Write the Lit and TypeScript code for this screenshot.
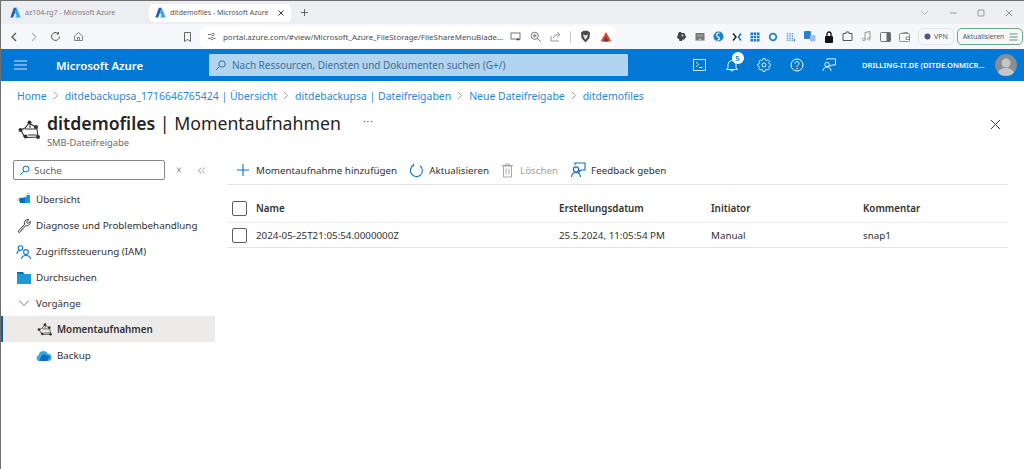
import { LitElement, html, css, svg } from "lit";
import { customElement } from "lit/decorators.js";

const i = (w: number, h: number, body: unknown, cls = "") =>
  html`<svg class="ic ${cls}" width=${w} height=${h} viewBox="0 0 ${w} ${h}" fill="none">${body}</svg>`;

const azureLogo = i(11, 11, svg`<path d="M3.800 .8h2.900L3.200 10.400H.3z" fill="#1f5fb8"/><path d="M6.700 .8l4 9.600H4.800l1.800-1.500L5 5.600z" fill="#3ba6ea"/>`);
const feedback = (c: string) => i(16, 16, svg`
  <circle cx="6" cy="7.500" r="2.600" stroke=${c} stroke-width="1.100"/>
  <path d="M1.500 15c.3-3 2-4.500 4.500-4.500s4.200 1.500 4.500 4.500" stroke=${c} stroke-width="1.100"/>
  <path d="M5 3V1h10v7h-4l-2 2V8" stroke=${c} stroke-width="1.100"/>`);
const snapshot = (s: number) => i(Math.round(24 * s), Math.round(24 * s), svg`<g transform="scale(${s})">
  <path d="M5 13l4-2 4-5 5 3 3 3 1 8-11 .5-3-1.500z" stroke="#333" stroke-width="1.100"/>
  <path d="M9 12h11M12 18h9M14 6v5" stroke="#333" stroke-width="1"/>
  <circle cx="13.500" cy="5.500" r="2" fill="#333"/><circle cx="20" cy="10" r="2" fill="#333"/><circle cx="4.500" cy="13" r="2" fill="#333"/><circle cx="22" cy="20" r="2" fill="#333"/><circle cx="9.500" cy="19.500" r="2" fill="#333"/></g>`);

@customElement("app-root")
export class AppRoot extends LitElement {
  static styles = css`
    :host { display: block; width: 1024px; height: 469px; overflow: hidden; }
    * { box-sizing: border-box; }
    .ic { display: block; flex: none; }
    .win { width: 1024px; height: 469px; background: #fff; display: flex; flex-direction: column; border-left: 1px solid #6e6e6e; border-top: 1px solid #6e6e6e; font-family: "Noto Sans", sans-serif; color: #323130; }

    .tabs { height: 23px; background: #eceef2; display: flex; align-items: center; padding-left: 2px; font-size: 7px; color: #7a7d82; white-space: nowrap; }
    .tab { display: flex; align-items: center; gap: 4px; height: 18px; padding: 0 7px; width: 146px; }
    .tab.on { background: #fff; width: 142px; border-radius: 5px; color: #50545a; padding-left: 6px; padding-right: 6px; }
    .tab .x { margin-left: auto; }
    .plus { margin-left: 9px; }
    .winctl { margin-left: auto; display: flex; align-items: center; gap: 20px; padding-right: 11px; }

    .bar { height: 25px; background: #f6f7fa; display: flex; align-items: center; }
    .nav { display: flex; align-items: center; gap: 12px; padding-left: 9px; width: 199px; flex: none; }
    .nav .bm { margin-left: 87px; }
    .url { width: 415px; height: 22px; background: #fff; border-radius: 6px; display: flex; align-items: center; padding: 0 5px 0 7px; font-size: 7.900px; color: #4a4d52; gap: 7px; white-space: nowrap; flex: none; }
    .url .end { margin-left: auto; display: flex; align-items: center; gap: 9px; }
    .sep { width: 1px; height: 12px; background: #c8c8c8; }
    .ext { display: flex; align-items: center; gap: 8px; margin-left: 61px; flex: none; }
    .vpn { margin-left: 8px; display: flex; align-items: center; gap: 3px; height: 17px; padding: 0 5px; border: 1px solid #e3e5e8; border-radius: 5px; font-size: 7px; color: #55585c; flex: none; }
    .upd { margin-left: 3px; width: 66px; height: 17px; display: flex; align-items: center; justify-content: space-between; padding: 0 4px 0 5px; border: 1px solid #6ea77f; border-radius: 5px; font-size: 6.800px; color: #55585c; flex: none; }

    .azure { height: 32px; background: #0078d4; display: flex; align-items: center; color: #fff; }
    .ham { margin-left: 13px; }
    .brand { margin-left: 29px; font-size: 11.350px; font-weight: 600; width: 153px; white-space: nowrap; }
    .search { width: 419px; height: 22px; background: #b1d4f0; border-radius: 1px; display: flex; align-items: center; padding-left: 6px; gap: 6px; font-size: 9.950px; color: #3f6e94; white-space: nowrap; }
    .top { margin-left: 65px; display: flex; align-items: center; gap: 18.500px; }
    .bell { position: relative; }
    .badge { position: absolute; left: 7px; top: -6px; width: 12px; height: 12px; border-radius: 50%; background: #fff; color: #0078d4; font-size: 7.500px; font-weight: 600; display: flex; align-items: center; justify-content: center; }
    .tenant { margin-left: 26px; font-size: 7.550px; font-weight: 600; width: 133px; white-space: nowrap; }
    .ava { width: 22px; height: 22px; border-radius: 50%; background: #8a8d92; overflow: hidden; }

    .crumb { height: 29px; display: flex; align-items: center; gap: 6px; padding-left: 16px; font-size: 10.450px; color: #2b88d8; white-space: nowrap; }
    .title { height: 43px; display: flex; align-items: flex-start; padding-left: 15px; padding-top: 1px; }
    .title .logo { margin-top: 6px; margin-right: 7px; }
    h1 { margin: 0; font-size: 17.700px; font-weight: 400; line-height: 24px; color: #252423; white-space: nowrap; }
    h1 b { font-weight: 600; }
    .sub { font-size: 9.300px; color: #6b6a69; line-height: 13px; margin-top: 1px; }
    .more { margin-left: 22px; margin-top: 3px; font-size: 10px; color: #555; letter-spacing: 1px; line-height: 14px; }
    .close { margin-left: auto; margin-right: 23px; margin-top: 8px; }

    .body { flex: 1; display: flex; padding-top: 7px; }
    .side { width: 214px; display: flex; flex-direction: column; }
    .find { display: flex; align-items: center; padding-left: 12px; height: 20px; margin-bottom: 6px; }
    .box { width: 152px; height: 20px; border: 1px solid #8a8886; border-radius: 2px; display: flex; align-items: center; gap: 4px; padding-left: 5px; font-size: 9.800px; color: #605e5c; }
    .fx { margin-left: 10px; } .cc { margin-left: 14px; }
    .it { height: 26px; display: flex; align-items: center; gap: 4px; padding-left: 15px; font-size: 9.800px; color: #323130; white-space: nowrap; }
    .it.sub2 { padding-left: 35px; gap: 5px; }
    .it.on { background: #edebe9; font-weight: 600; border-left: 2px solid #0f5fa8; padding-left: 33px; }
    .it .ic { width: 16px; }

    .main { flex: 1; padding: 0 16px 0 12px; font-size: 9.800px; white-space: nowrap; }
    .cmds { margin-top: -4px; display: flex; align-items: center; border-bottom: 1px solid #e3e3e3; padding-left: 9px; height: 29px; }
    .cmd { display: flex; align-items: center; gap: 5px; margin-right: 12px; color: #323130; }
    .cmd:first-child { gap: 6px; }
    .cmd.off { color: #a19f9d; gap: 6px; }
    .row { display: grid; grid-template-columns: 24px 303px 152px 152px 1fr; align-items: center; padding-left: 5px; height: 25px; border-bottom: 1px solid #eeedec; }
    .row.head { font-weight: 600; height: 38px; padding-top: 9px; }
    .row.data { border-bottom: 1px solid #e3e3e3; }
    .chk { width: 15px; height: 15px; border: 1px solid #605e5c; border-radius: 2px; }
  `;

  render() {
    return html`<div class="win">
      <div class="tabs">
        <div class="tab">${azureLogo}<span>az104-rg7 - Microsoft Azure</span></div>
        <div class="tab on">${azureLogo}<span>ditdemofiles - Microsoft Azure</span>
          ${i(8, 8, svg`<path d="M1.500 1.500l5 5m0-5l-5 5" stroke="#444" stroke-width="1"/>`, "x")}</div>
        ${i(9, 9, svg`<path d="M4.500 1v7M1 4.500h7" stroke="#666" stroke-width="1"/>`, "plus")}
        <div class="winctl">
          ${i(9, 6, svg`<path d="M1 1l3.500 3.500L8 1" stroke="#a8aaae" stroke-width=".8"/>`)}
          ${i(8, 8, svg`<path d="M1 4h6.500" stroke="#8a8d91" stroke-width=".9"/>`)}
          ${i(8, 8, svg`<rect x="1" y="1" width="6" height="6" rx="1" stroke="#8a8d91" stroke-width=".9"/>`)}
          ${i(8, 8, svg`<path d="M1 1l6 6M7 1L1 7" stroke="#8a8d91" stroke-width=".9"/>`)}
        </div>
      </div>
      <div class="bar">
        <div class="nav">
          ${i(8, 12, svg`<path d="M6 2L2 6l4 4" stroke="#555" stroke-width="1.200"/>`)}
          ${i(8, 12, svg`<path d="M2 2l4 4-4 4" stroke="#bbb" stroke-width="1.200"/>`)}
          ${i(11, 11, svg`<path d="M9.500 5.500a4 4 0 1 1-1.200-2.900M8.500 1v2H6.500" stroke="#555" stroke-width="1"/>`)}
          ${i(11, 11, svg`<path d="M1.500 5.200L5.500 1.500l4 3.700v4.300h-8zM4.500 9.500V6.500h2v3" stroke="#777" stroke-width=".9"/>`)}
          ${i(9, 12, svg`<path d="M1.500 1.500h6v9L4.500 8.500l-3 2z" stroke="#666" stroke-width="1"/>`, "bm")}
        </div>
        <div class="url">
          ${i(9, 9, svg`<path d="M1 2.500h3M6.500 6.500H8.500M3 6.500H1" stroke="#666" stroke-width=".9"/><circle cx="6" cy="2.500" r="1.300" stroke="#666" stroke-width=".8"/><circle cx="5" cy="6.500" r="1.300" stroke="#666" stroke-width=".8"/>`)}
          <span>portal.azure.com/#view/Microsoft_Azure_FileStorage/FileShareMenuBlade...</span>
          <div class="end">
            ${i(11, 9, svg`<rect x="1" y="1" width="9" height="6" stroke="#666" stroke-width=".9"/><path d="M6.500 7.500h3" stroke="#444" stroke-width="1.500"/>`)}
            ${i(11, 11, svg`<circle cx="4.800" cy="4.800" r="3.600" stroke="#666" stroke-width=".9"/><path d="M7.500 7.500l3 3M3 4.800h3.600M4.800 3v3.600" stroke="#666" stroke-width=".9"/>`)}
            ${i(11, 11, svg`<path d="M1 5v5h8M3.500 7c.5-2.500 2-3.500 5-3.500M7 1l3 2.500L7 6" stroke="#888" stroke-width=".9"/>`)}
            <span class="sep"></span>
            ${i(11, 13, svg`<path d="M1 2.500L3.500.8h4L10 2.500 9.500 8 5.500 12.500 1.500 8z" fill="#4a4a4a"/><path d="M3 4.500l2.500.8 2.500-.8-1 3.500-1.500 1.500L4 8z" fill="#dcdcdc"/>`)}
            ${i(12, 11, svg`<path d="M6 1l5.500 9.500H.5z" fill="#e2492f"/><path d="M6 5l2.500 5.500h-5z" fill="#3a4a5a"/>`)}
          </div>
        </div>
        <div class="ext">
          ${i(11, 11, svg`<path d="M2 3l1-2h2l.5 1H8l1 1 .5 2 1 1-1.500 1-.5 1.500-2 0-.5 1.500H3.500L3 8 1 7z" fill="#444"/><circle cx="6.500" cy="4.500" r="1" fill="#ddd"/>`)}
          ${i(10, 10, svg`<rect x=".5" y="1" width="9" height="7.500" fill="#777"/><path d="M2.500 8.500l2.500-2.500 2.500 2.500" fill="#bbb"/><rect x="2" y="2.500" width="6" height="2" fill="#999"/>`)}
          ${i(11, 11, svg`<circle cx="5.500" cy="5.500" r="5" fill="#1a80d0"/><path d="M6.500 2C4 2 3 3.500 4 5c1 1.500 2.500 1 2.500 3L4.500 9.500" stroke="#fff" stroke-width="1.200"/>`)}
          ${i(10, 10, svg`<path d="M1 1.500L4 5 1 8.500" stroke="#222" stroke-width="1.500"/><path d="M9 1.500L6.500 5 9 8.500" stroke="#1a70c0" stroke-width="1.500"/>`)}
          ${i(10, 10, svg`<rect x=".5" y=".5" width="9" height="9" fill="#1f78d1"/><path d="M3.500 .5v9M6.500 .5v9M.5 3.500h9M.5 6.500h9" stroke="#fff" stroke-width=".7"/>`)}
          ${i(10, 10, svg`<circle cx="5" cy="5" r="3.300" stroke="#2a80c8" stroke-width="1.800"/>`)}
          ${i(10, 10, svg`<path d="M1.500 1v8M4 1v8M6.500 1v8" stroke="#6aa4e0" stroke-width="1.500" stroke-dasharray="1.500 .7"/><path d="M8.500 7v2.500" stroke="#2a70c0"/>`)}
          ${i(12, 11, svg`<rect x="0" y="0" width="7" height="8" rx="1" fill="#2a80d0"/><rect x="6" y="4" width="5.500" height="6.500" rx="1" fill="#9cc0e8"/>`)}
          ${i(10, 12, svg`<rect x="1" y="5" width="8" height="7" rx="1" fill="#111"/><path d="M3 5.500V3a2 2 0 0 1 4 0v2.500" stroke="#111" stroke-width="1.300"/>`)}
          ${i(11, 11, svg`<path d="M1 2.500h3V1h3v1.500h3v7H1z" stroke="#555" stroke-width="1"/>`)}
          ${i(11, 11, svg`<path d="M4 8.500V1.500l5-1v7" stroke="#888" stroke-width=".9"/><circle cx="2.800" cy="8.500" r="1.300" stroke="#888" stroke-width=".8"/><circle cx="7.800" cy="7.800" r="1.300" stroke="#888" stroke-width=".8"/>`)}
          ${i(11, 10, svg`<rect x=".5" y=".5" width="10" height="9" rx="1" stroke="#666" stroke-width=".9"/><rect x="6.500" y=".5" width="4" height="9" fill="#666"/>`)}
          ${i(11, 10, svg`<rect x=".5" y="1.500" width="10" height="8" rx="1" stroke="#777" stroke-width=".8"/><path d="M7 5h3.500v2.500H7zM2 1.500L6 .5h3" stroke="#777" stroke-width=".8"/>`)}
        </div>
        <div class="vpn">${i(7, 7, svg`<circle cx="3.500" cy="3.500" r="3" fill="#4a5a70"/>`)}VPN</div>
        <div class="upd">Aktualisieren ${i(9, 8, svg`<path d="M.5 1h8M.5 4h8M.5 7h8" stroke="#6b9077" stroke-width="1"/>`)}</div>
      </div>
      <div class="azure">
        ${i(13, 10, svg`<path d="M0 1h13M0 5h13M0 9h13" stroke="#d4e8f8" stroke-width="1"/>`, "ham")}
        <div class="brand">Microsoft Azure</div>
        <div class="search">
          ${i(11, 11, svg`<circle cx="7" cy="4" r="3.200" stroke="#3f6e94" stroke-width="1"/><path d="M4.500 6.500L1 10" stroke="#3f6e94" stroke-width="1"/>`)}
          <span>Nach Ressourcen, Diensten und Dokumenten suchen (G+/)</span>
        </div>
        <div class="top">
          ${i(13, 12, svg`<rect x=".5" y=".5" width="12" height="11" stroke="#fff" stroke-width=".8"/><path d="M3 3l2.500 2.500L3 8M6 8.500h3.500" stroke="#fff" stroke-width=".9"/>`)}
          <div class="bell">${i(14, 14, svg`<path d="M3 10V6.500a4 4 0 0 1 8 0V10l1.500 1.500h-11zM5.500 11.500a1.500 1.500 0 0 0 3 0" stroke="#fff" stroke-width=".9"/>`)}<span class="badge">5</span></div>
          ${i(14, 14, svg`<circle cx="7" cy="7" r="2" stroke="#fff" stroke-width=".9"/><path d="M5.800 1h2.400l.4 1.700 1.300.6 1.500-.9 1.600 1.600-.9 1.500.6 1.300 1.700.4v1.600l-1.700.4-.6 1.300.9 1.500-1.600 1.600-1.500-.9-1.300.6-.4 1.700H5.800l-.4-1.700-1.300-.6-1.500.9-1.600-1.600.9-1.500-.6-1.300L0 8.800V7.200l1.700-.4.600-1.300-.9-1.500L3 2.400l1.500.9 1.300-.6z" transform="translate(.6 -.4) scale(.92)" stroke="#fff" stroke-width=".9"/>`)}
          ${i(14, 14, svg`<circle cx="7" cy="7" r="6" stroke="#fff" stroke-width="1"/><path d="M5 5.500a2 2 0 1 1 3 1.700c-.7.400-1 .8-1 1.500" stroke="#fff" stroke-width="1"/><circle cx="7" cy="10.500" r=".7" fill="#fff"/>`)}
          ${i(14, 14, svg`<circle cx="5" cy="6.500" r="2.200" stroke="#fff" stroke-width=".9"/><path d="M1 13c.2-2.700 1.800-4 4-4s3.800 1.300 4 4M5 2V.8h8.500V7H9.500L8 8.500V7" stroke="#fff" stroke-width=".9"/>`)}
        </div>
        <div class="tenant">DRILLING-IT.DE (DITDE.ONMICR...</div>
        <div class="ava">${i(22, 22, svg`<circle cx="11" cy="9" r="4.500" fill="#c4c6c9"/><path d="M2 23c0-6 4-9 9-9s9 3 9 9z" fill="#c4c6c9"/>`)}</div>
      </div>
      <div class="crumb">
        <span>Home</span>${this.chev()}<span>ditdebackupsa_1716646765424 | Übersicht</span>${this.chev()}<span>ditdebackupsa | Dateifreigaben</span>${this.chev()}<span>Neue Dateifreigabe</span>${this.chev()}<span>ditdemofiles</span>
      </div>
      <div class="title">
        <div class="logo">${snapshot(1)}</div>
        <div>
          <h1><b>ditdemofiles</b> | Momentaufnahmen</h1>
          <div class="sub">SMB-Dateifreigabe</div>
        </div>
        <div class="more">···</div>
        ${i(11, 11, svg`<path d="M1 1l9 9M10 1l-9 9" stroke="#444" stroke-width="1"/>`, "close")}
      </div>
      <div class="body">
        <div class="side">
          <div class="find">
            <div class="box">${i(11, 11, svg`<circle cx="7" cy="4" r="3" stroke="#0078d4" stroke-width="1"/><path d="M4.700 6.300L1 10" stroke="#0078d4" stroke-width="1"/>`)}Suche</div>
            ${i(8, 8, svg`<path d="M2 1.500l4 5M6 1.500l-4 5" stroke="#777" stroke-width=".8"/>`, "fx")}
            ${i(9, 9, svg`<path d="M4.500 1.500L1.500 4.500l3 3M8 1.500L5 4.500l3 3" stroke="#8a8a8a" stroke-width=".8"/>`, "cc")}
          </div>
          <div class="it">${i(16, 14, svg`<path d="M4 6l6-1 1-2h3v8H5L3 9z" fill="#1a9ad6"/><path d="M3 6h6v5H4z" fill="#0f6cbd"/><circle cx="12" cy="1.500" r=".8" fill="#59b4e8"/><circle cx="1.500" cy="8" r=".8" fill="#59b4e8"/>`)}Übersicht</div>
          <div class="it">${i(16, 15, svg`<path d="M2 13.500L8.500 6.500c-.8-2.500.8-5 3.500-5l.8.300L10.500 4l1.500 1.500 2.200-2.200c.5 3-2 5.200-4.600 4.300L3.500 14.500z" stroke="#333" stroke-width="1"/>`)}Diagnose und Problembehandlung</div>
          <div class="it">${i(16, 15, svg`<circle cx="4.500" cy="4" r="2.300" stroke="#0f78d0" stroke-width="1.100"/><path d="M1 10c0-2 1.500-3.500 3.500-3.500" stroke="#0f78d0" stroke-width="1.100"/><circle cx="10" cy="8" r="2.400" stroke="#0f78d0" stroke-width="1.100"/><path d="M5.500 15c.2-2.300 2-3.500 4.500-3.500s4.300 1.200 4.500 3.500" stroke="#0f78d0" stroke-width="1.100"/>`)}Zugriffssteuerung (IAM)</div>
          <div class="it">${i(16, 13, svg`<path d="M1 1h6l1 2H15v10H1z" fill="#1a9ad6"/><path d="M1 1h6l1 2H1z" fill="#0f6cbd"/>`)}Durchsuchen</div>
          <div class="it">${i(16, 9, svg`<path d="M3 1.500l5 5 5-5" stroke="#666" stroke-width=".9"/>`)}Vorgänge</div>
          <div class="it sub2 on">${snapshot(0.66)}Momentaufnahmen</div>
          <div class="it sub2">${i(16, 13, svg`<path d="M3 12a3 3 0 0 1-.5-5.800C3 3.500 5 2 7.500 2c2 0 3.500 1 4.300 2.700A3.500 3.500 0 0 1 12 12z" fill="#3aa8e0"/><path d="M5 8a3 3 0 0 1 5-2l4 1.500L11 12H3z" fill="#0f6cc0"/>`)}Backup</div>
        </div>
        <div class="main">
          <div class="cmds">
            <div class="cmd">${i(14, 14, svg`<path d="M7 1v12M1 7h12" stroke="#0078d4" stroke-width="1.100"/>`)}Momentaufnahme hinzufügen</div>
            <div class="cmd">${i(15, 15, svg`<path d="M11 2.800a6 6 0 1 1-6.500-.5M4.500 .8V3H2.300" stroke="#0078d4" stroke-width="1.100"/>`)}Aktualisieren</div>
            <div class="cmd off">${i(13, 15, svg`<path d="M2.500 3h8v11h-8zM1 2.500h11M4.500 2.500V1h4v1.500M5 5.500v6M8 5.500v6" stroke="#a19f9d" stroke-width=".9"/>`)}Löschen</div>
            <div class="cmd">${feedback("#0f6cbd")}Feedback geben</div>
          </div>
          <div class="row head"><span class="chk"></span><span>Name</span><span>Erstellungsdatum</span><span>Initiator</span><span>Kommentar</span></div>
          <div class="row data"><span class="chk"></span><span>2024-05-25T21:05:54.0000000Z</span><span>25.5.2024, 11:05:54 PM</span><span>Manual</span><span>snap1</span></div>
        </div>
      </div>
    </div>`;
  }

  chev() {
    return i(6, 9, svg`<path d="M1 1l3.500 3.500L1 8" stroke="#888" stroke-width=".8"/>`);
  }
}
